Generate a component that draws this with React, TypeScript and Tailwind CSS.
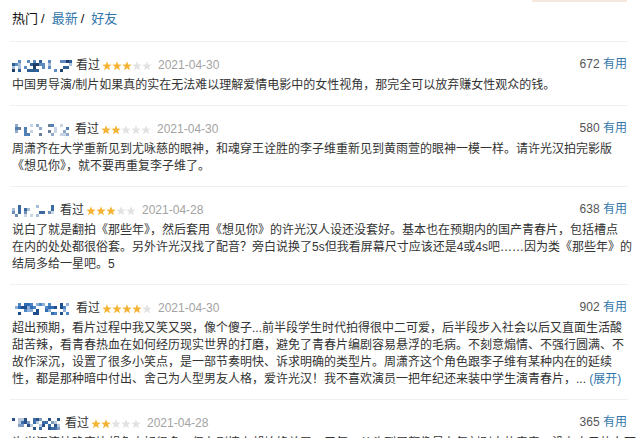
import React from 'react';

type Review = {
  nameW: number;
  seed: number;
  palette: string[];
  rating: number;
  date: string;
  votes: number;
  lines: React.ReactNode[];
};

const REVIEWS: Review[] = [
  {
    nameW: 60,
    seed: 7,
    palette: ['#2e5f95', '#5d8ac0', '#a9c0dc', '#1f3f66'],
    rating: 3,
    date: '2021-04-30',
    votes: 672,
    lines: ['中国男导演/制片如果真的实在无法难以理解爱情电影中的女性视角，那完全可以放弃赚女性观众的钱。'],
  },
  {
    nameW: 59,
    seed: 19,
    palette: ['#4f7fb5', '#8fa9c9', '#c8d4e3', '#6a7f99'],
    rating: 2,
    date: '2021-04-30',
    votes: 580,
    lines: [
      '周潇齐在大学重新见到尤咏慈的眼神，和魂穿王诠胜的李子维重新见到黄雨萱的眼神一模一样。请许光汉拍完影版',
      '《想见你》，就不要再重复李子维了。',
    ],
  },
  {
    nameW: 44,
    seed: 31,
    palette: ['#6d8fb8', '#a8bdd6', '#3c6aa0', '#cdd8e6'],
    rating: 3,
    date: '2021-04-28',
    votes: 638,
    lines: [
      '说白了就是翻拍《那些年》，然后套用《想见你》的许光汉人设还没套好。基本也在预期内的国产青春片，包括槽点',
      '在内的处处都很俗套。另外许光汉找了配音？旁白说换了5s但我看屏幕尺寸应该还是4或4s吧……因为类《那些年》的',
      '结局多给一星吧。5',
    ],
  },
  {
    nameW: 60,
    seed: 43,
    palette: ['#2f6db5', '#4d86c6', '#1d4f8f', '#8fb0d8'],
    rating: 4,
    date: '2021-04-30',
    votes: 902,
    lines: [
      '超出预期，看片过程中我又笑又哭，像个傻子...前半段学生时代拍得很中二可爱，后半段步入社会以后又直面生活酸',
      '甜苦辣，看青春热血在如何经历现实世界的打磨，避免了青春片编剧容易悬浮的毛病。不刻意煽情、不强行圆满、不',
      '故作深沉，设置了很多小笑点，是一部节奏明快、诉求明确的类型片。周潇齐这个角色跟李子维有某种内在的延续',
      <>
        性，都是那种暗中付出、舍己为人型男友人格，爱许光汉！我不喜欢演员一把年纪还来装中学生演青春片，...{' '}
        <span className="text-[#3377aa]">(展开)</span>
      </>,
    ],
  },
  {
    nameW: 49,
    seed: 57,
    palette: ['#3b6ea8', '#7f9cc2', '#b9c9de', '#2a5288'],
    rating: 2,
    date: '2021-04-28',
    votes: 365,
    lines: ['许光汉演技确实比想象中好很多，但在剧情上却始终差了一口气，从头到尾都像是在复刻别人的青春，没有自己的东西。'],
  },
];

// pixelated (blurred) user name
const Mosaic: React.FC<{ w: number; seed: number; palette: string[] }> = ({ w, seed, palette }) => {
  let s = seed * 9301 + 49297;
  const rnd = () => {
    s = (s * 9301 + 49297) % 233280;
    return s / 233280;
  };
  const rects: React.ReactNode[] = [];
  const cols = Math.floor(w / 3);
  for (let c = 0; c < cols; c++) {
    if (c % 4 === 3 && rnd() < 0.6) continue;
    for (let r = 0; r < 4; r++) {
      if (rnd() < 0.5) {
        rects.push(
          <rect
            key={`${c}-${r}`}
            x={c * 3}
            y={r * 3}
            width={3}
            height={3}
            fill={palette[Math.floor(rnd() * palette.length)]}
          />
        );
      }
    }
  }
  return (
    <svg width={w} height={12} viewBox={`0 0 ${w} 12`} className="shrink-0">
      {rects}
    </svg>
  );
};

const Star: React.FC<{ on: boolean }> = ({ on }) => (
  <svg width={10} height={10} viewBox="0 0 10 10">
    <polygon
      points="5,0.2 6.23,3.5 9.76,3.65 7,5.85 7.94,9.25 5,7.3 2.06,9.25 3,5.85 0.24,3.65 3.77,3.5"
      fill={on ? '#f5b335' : '#e2e2e2'}
    />
  </svg>
);

const Item: React.FC<{ r: Review }> = ({ r }) => (
  <div className="ml-[10px] w-[618px] border-t border-[#f0f0f0]">
    <div className="pl-[2px] pr-[1px] pt-[15px] pb-[11px]">
      <div className="flex h-[17px] items-center text-[12px] leading-[17px]">
        <Mosaic w={r.nameW} seed={r.seed} palette={r.palette} />
        <span className="ml-[4px] text-[#333]">看过</span>
        <span className="ml-[2px] flex">
          {[0, 1, 2, 3, 4].map((i) => (
            <Star key={i} on={i < r.rating} />
          ))}
        </span>
        <span className="ml-[6px] text-[#a3a3a3]">{r.date}</span>
        <span className="ml-auto -mt-[2px] text-[#555]">
          {r.votes} <span className="text-[#3377aa]">有用</span>
        </span>
      </div>
      <div className="mt-[3px] text-[12px] leading-[17px] text-[#333]">
        {r.lines.map((l, i) => (
          <div key={i} className="whitespace-nowrap">
            {l}
          </div>
        ))}
      </div>
    </div>
  </div>
);

export default function App() {
  return (
    <div
      className="w-[640px] h-[438px] overflow-hidden bg-white"
      style={{ fontFamily: '"Liberation Sans", "Noto Sans CJK SC", sans-serif' }}
    >
      <div className="flex h-[2px] justify-end pr-[13px]">
        <div className="w-[95px] bg-[#f6e8dc]" />
      </div>
      <div className="flex h-[39px] pl-[12px] pt-[8px] text-[13px] leading-[17px]">
        <span className="text-[#111]">热门</span>
        <span className="ml-[3px] mr-[7px] text-[#111]">/</span>
        <span className="text-[#3377aa]">最新</span>
        <span className="ml-[3px] mr-[7px] text-[#111]">/</span>
        <span className="text-[#3377aa]">好友</span>
      </div>
      {REVIEWS.map((r, i) => (
        <Item key={i} r={r} />
      ))}
    </div>
  );
}
